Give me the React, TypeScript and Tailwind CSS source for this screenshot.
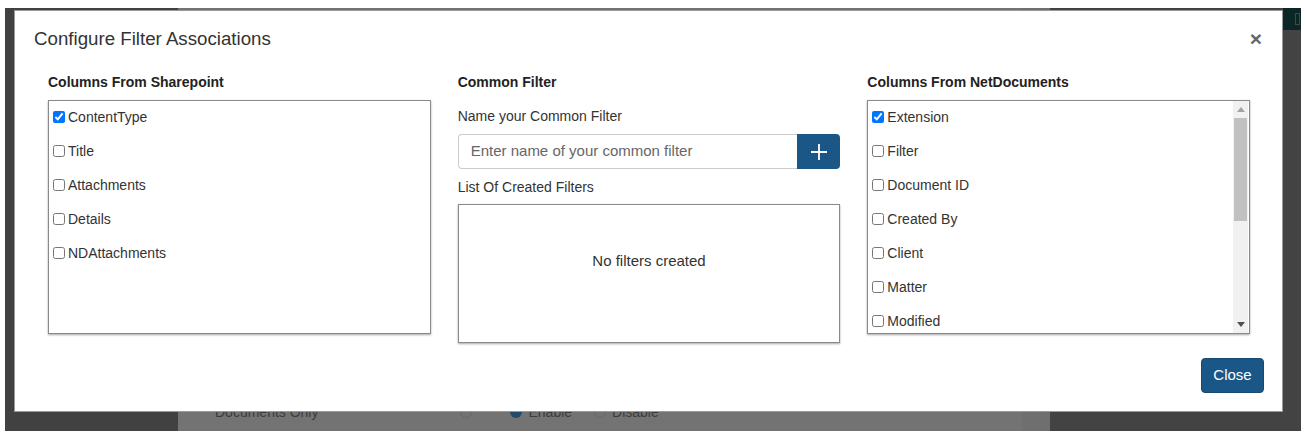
import React from 'react';

const spItems = [
  { label: 'ContentType', checked: true },
  { label: 'Title', checked: false },
  { label: 'Attachments', checked: false },
  { label: 'Details', checked: false },
  { label: 'NDAttachments', checked: false },
];

const ndItems = [
  { label: 'Extension', checked: true },
  { label: 'Filter', checked: false },
  { label: 'Document ID', checked: false },
  { label: 'Created By', checked: false },
  { label: 'Client', checked: false },
  { label: 'Matter', checked: false },
  { label: 'Modified', checked: false },
  { label: 'Modified By', checked: false },
  { label: 'Document Name', checked: false },
  { label: 'Version', checked: false },
];

function CheckRow({ label, checked }: { label: string; checked: boolean }) {
  return (
    <label className="flex items-center gap-[3px] pl-[4px] pt-[8px] pb-[10px] leading-[16px] text-[14px] text-[#333] whitespace-nowrap">
      <input
        type="checkbox"
        defaultChecked={checked}
        className="w-[12px] h-[12px] m-0 accent-[#0075ff]"
      />
      <span>{label}</span>
    </label>
  );
}

function Heading({ children }: { children: React.ReactNode }) {
  return <h4 className="text-[14px] leading-[16px] font-bold text-[#222] mb-[10px]">{children}</h4>;
}

function FakeScrollbar() {
  return (
    <div className="w-[15px] bg-[#f1f1f1] flex flex-col items-center">
      <div className="h-[17px] flex items-center justify-center">
        <svg width="8" height="5" viewBox="0 0 8 5">
          <path d="M0 5L4 0L8 5Z" fill="#a3a3a3" />
        </svg>
      </div>
      <div className="w-[13px] h-[103px] bg-[#c1c1c1]" />
      <div className="flex-1" />
      <div className="h-[17px] flex items-center justify-center">
        <svg width="8" height="5" viewBox="0 0 8 5">
          <path d="M0 0L8 0L4 5Z" fill="#505050" />
        </svg>
      </div>
    </div>
  );
}

export default function App() {
  return (
    <div
      className="bg-white pt-[8px] pl-[5px] pr-[6px] pb-[4px]"
      style={{ fontFamily: '"Liberation Sans", Arial, sans-serif' }}
    >
      <div className="relative h-[423px] flex">
        {/* page behind the overlay */}
        <div className="w-[173px] bg-[#414141]" />
        <div className="w-[844px] bg-[#737373] flex flex-col justify-end">
          <div className="flex items-center h-[20px] mb-[9px] pl-[37px] text-[14px] text-[#3c3c3c]">
            <span>Documents Only</span>
            <span className="ml-[142px] w-[12px] h-[12px] rounded-full border border-[#666]" />
            <span className="ml-[38px] w-[12px] h-[12px] rounded-full bg-[#234c6c]" />
            <span className="ml-[6px]">Enable</span>
            <span className="ml-[22px] w-[12px] h-[12px] rounded-full border border-[#666]" />
            <span className="ml-[6px]">Disable</span>
          </div>
        </div>
        <div className="w-[28px] bg-[#6f6f6f]" />
        <div className="flex-1 bg-[#434343] flex flex-col items-end">
          <div className="w-[18px] h-[22px] bg-[#0c2626] flex items-center justify-end pr-[1px]">
            <div className="w-[5px] h-[12px] border border-[#445]" />
          </div>
        </div>

        {/* modal */}
        <div className="absolute left-[9px] top-[2px] w-[1269px] h-[402px] bg-white border border-[#999] flex flex-col">
          <div className="flex items-center justify-between pl-[19px] pr-[20px] pt-[16px]">
            <h2 className="text-[18.7px] leading-[24px] text-[#333]">Configure Filter Associations</h2>
            <span className="text-[21px] leading-[24px] font-bold text-[#666]">×</span>
          </div>

          <div className="flex gap-[27px] pl-[33px] pr-[32px] pt-[23px]">
            <div className="w-[383px]">
              <Heading>Columns From Sharepoint</Heading>
              <div className="h-[234px] border border-[#8a8a8a] shadow-[0_1px_2px_rgba(0,0,0,0.35)]">
                {spItems.map((it) => (
                  <CheckRow key={it.label} {...it} />
                ))}
              </div>
            </div>

            <div className="w-[383px]">
              <Heading>Common Filter</Heading>
              <div className="text-[14px] leading-[16px] text-[#333] pt-[8px]">Name your Common Filter</div>
              <div className="flex mt-[10px] h-[35px]">
                <input
                  type="text"
                  placeholder="Enter name of your common filter"
                  className="flex-1 min-w-0 border border-[#ccc] border-r-0 rounded-l-[4px] px-[12px] text-[15px] text-[#333] placeholder:text-[#666] outline-none"
                />
                <button
                  type="button"
                  className="w-[43px] bg-[#1a5686] rounded-r-[4px] flex items-center justify-center"
                >
                  <svg width="18" height="18" viewBox="0 0 18 18">
                    <path d="M9 1v16M1 9h16" stroke="white" strokeWidth="1.8" />
                  </svg>
                </button>
              </div>
              <div className="text-[14px] leading-[16px] text-[#333] mt-[10px]">List Of Created Filters</div>
              <div className="mt-[9px] h-[139px] border border-[#8a8a8a] shadow-[0_1px_2px_rgba(0,0,0,0.35)] flex items-center justify-center pb-[25px]">
                <span className="text-[15px] text-[#333]">No filters created</span>
              </div>
            </div>

            <div className="w-[383px]">
              <Heading>Columns From NetDocuments</Heading>
              <div className="h-[234px] border border-[#8a8a8a] shadow-[0_1px_2px_rgba(0,0,0,0.35)] flex pr-[1px]">
                <div className="flex-1 overflow-hidden">
                  {ndItems.map((it) => (
                    <CheckRow key={it.label} {...it} />
                  ))}
                </div>
                <FakeScrollbar />
              </div>
            </div>
          </div>

          <div className="flex justify-end pr-[18px] pt-[15px]">
            <button
              type="button"
              className="w-[63px] h-[35px] bg-[#1a5686] rounded-[4px] text-white text-[15px] border border-[#164a74]"
            >
              Close
            </button>
          </div>
        </div>
      </div>
    </div>
  );
}
